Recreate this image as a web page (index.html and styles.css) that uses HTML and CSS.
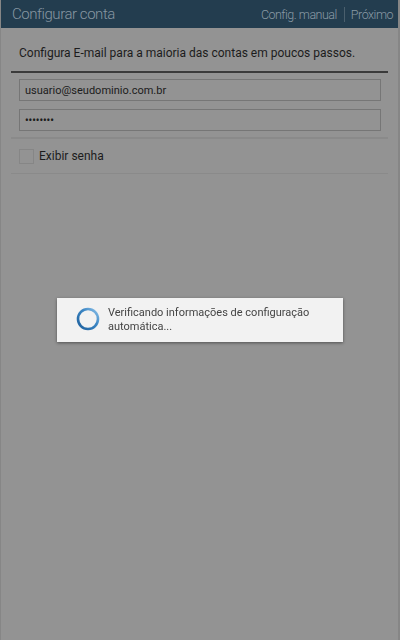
FILE: index.html
```html
<!DOCTYPE html>
<html lang="pt-BR">
<head>
    <meta charset="UTF-8">
    <meta name="viewport" content="width=device-width, initial-scale=1.0">
    <title>Configurar conta</title>
    <link rel="stylesheet" href="styles.css">
</head>
<body>
    <header class="topbar">
        <span class="topbar-title">Configurar conta</span>
        <nav class="topbar-actions">
            <a href="#manual">Config. manual</a>
            <span class="sep"></span>
            <a href="#next">Próximo</a>
        </nav>
    </header>

    <main class="content">
        <p class="intro">Configura E-mail para a maioria das contas em poucos passos.</p>
        <div class="fields">
            <input class="field" type="text" value="usuario@seudominio.com.br">
            <input class="field field-pass" type="text" value="••••••••">
        </div>
        <label class="check-row">
            <span class="checkbox"></span>
            <span>Exibir senha</span>
        </label>
    </main>

    <!-- Diálogo de progresso -->
    <div class="dialog-layer">
        <div class="dialog">
            <svg class="spinner" width="24" height="24" viewBox="0 0 24 24">
                <defs>
                    <linearGradient id="spin" x1="0" y1="1" x2="1" y2="0">
                        <stop offset="0" stop-color="#1d5f9c"/>
                        <stop offset="0.6" stop-color="#3c86c4"/>
                        <stop offset="1" stop-color="#8fc3ea"/>
                    </linearGradient>
                </defs>
                <circle cx="12" cy="12" r="10" fill="none" stroke="url(#spin)" stroke-width="2.6"/>
            </svg>
            <p class="dialog-text">Verificando informações de configuração automática...</p>
        </div>
    </div>
</body>
</html>
```

FILE: styles.css
```css
body {
    margin: 0;
    height: 640px;
    background: #939393;
    font-family: Roboto, 'Noto Sans', sans-serif;
    overflow: hidden;
    border-left: 1px solid #868686;
    border-right: 2px solid #868686;
    box-sizing: border-box;
}
.topbar {
    height: 28px;
    background: #233d4f;
    display: flex;
    align-items: center;
    justify-content: space-between;
    padding: 0 5px 0 11px;
}
.topbar-title {
    color: #8797a2;
    font-size: 15px;
    font-weight: 300;
    letter-spacing: -0.45px;
}
.topbar-actions {
    display: flex;
    align-items: center;
}
.topbar-actions a {
    color: #8a9aa5;
    font-size: 12.5px;
    font-weight: 300;
    letter-spacing: -0.5px;
    text-decoration: none;
}
.sep {
    width: 1px;
    height: 15px;
    background: #4a5f6d;
    margin: 0 6px 0 7px;
}
.content {
    margin: 0 10px;
}
.intro {
    margin: 0;
    padding: 18px 8px 11px;
    font-size: 12px;
    color: #1c1c1c;
    border-bottom: 2px solid #3a3a3a;
}
.fields {
    display: flex;
    flex-direction: column;
    gap: 8px;
    padding: 6px 7px 6px 8px;
    border-bottom: 2px solid #8a8a8a;
}
.field {
    height: 22px;
    box-sizing: border-box;
    border: 1px solid #767676;
    background: transparent;
    font-family: inherit;
    font-size: 11px;
    color: #1c1c1c;
    padding: 0 5px;
    margin: 0;
    outline: none;
}
.field-pass {
    font-size: 10px;
    font-weight: 700;
}
.check-row {
    display: flex;
    align-items: center;
    gap: 5px;
    height: 34px;
    padding-left: 8px;
    font-size: 12px;
    color: #1c1c1c;
    border-bottom: 1px solid #8a8a8a;
}
.checkbox {
    width: 13px;
    height: 13px;
    border: 1px solid #868686;
}
.dialog-layer {
    position: fixed;
    top: 0;
    left: 0;
    width: 100%;
    height: 100%;
    display: flex;
    align-items: center;
    justify-content: center;
}
.dialog {
    width: 286px;
    height: 44px;
    box-sizing: border-box;
    background: #f2f2f2;
    box-shadow: 0 1px 3px rgba(0, 0, 0, 0.45);
    display: flex;
    align-items: center;
    padding-left: 19px;
    gap: 8px;
}
.spinner {
    flex-shrink: 0;
    margin-top: -3px;
}
.dialog-text {
    margin: 0;
    font-size: 11px;
    line-height: 14px;
    color: #444;
    width: 220px;
}
```
